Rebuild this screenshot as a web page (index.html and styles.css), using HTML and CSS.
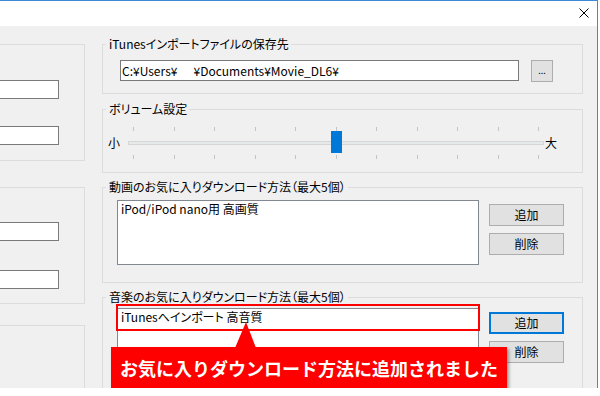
FILE: index.html
```html
<!DOCTYPE html>
<html lang="ja">
<head>
    <meta charset="UTF-8">
    <meta name="viewport" content="width=device-width, initial-scale=1.0">
    <title>設定</title>
    <link rel="stylesheet" href="styles.css">
</head>
<body>
    <div class="window">
        <div class="titlebar">
            <svg class="close" width="10" height="10" viewBox="0 0 10 10">
                <path d="M0.5 0.5 L9.5 9.5 M9.5 0.5 L0.5 9.5" stroke="#000" stroke-width="1" fill="none"/>
            </svg>
        </div>

        <div class="client">
            <!-- left column, cut off by the crop -->
            <div class="col-left">
                <div class="box box-first">
                    <input class="field" type="text">
                    <input class="field field-second" type="text">
                </div>
                <div class="box box-middle">
                    <input class="field" type="text">
                    <input class="field field-second" type="text">
                </div>
                <div class="box box-last"></div>
            </div>

            <div class="col-right">
                <fieldset class="group group-path">
                    <legend>iTunesインポートファイルの保存先</legend>
                    <div class="group-body path-row">
                        <input class="path" type="text" value="C:¥Users¥      ¥Documents¥Movie_DL6¥">
                        <button class="btn btn-browse">...</button>
                    </div>
                </fieldset>

                <fieldset class="group group-volume">
                    <legend>ボリューム設定</legend>
                    <div class="group-body volume-row">
                        <span class="volume-label">小</span>
                        <div class="slider">
                            <div class="ticks"><i></i><i></i><i></i><i></i><i></i><i></i><i></i><i></i><i></i><i></i><i></i></div>
                            <div class="track"></div>
                            <div class="ticks"><i></i><i></i><i></i><i></i><i></i><i></i><i></i><i></i><i></i><i></i><i></i></div>
                            <div class="thumb"></div>
                        </div>
                        <span class="volume-label volume-max">大</span>
                    </div>
                </fieldset>

                <fieldset class="group group-video">
                    <legend>動画のお気に入りダウンロード方法（最大5個）</legend>
                    <div class="group-body list-row">
                        <div class="listbox">
                            <div class="list-item">iPod/iPod nano用 高画質</div>
                        </div>
                        <div class="list-buttons">
                            <button class="btn">追加</button>
                            <button class="btn">削除</button>
                        </div>
                    </div>
                </fieldset>

                <fieldset class="group group-music">
                    <legend>音楽のお気に入りダウンロード方法（最大5個）</legend>
                    <div class="group-body list-row">
                        <div class="listbox">
                            <div class="list-item">iTunesへインポート 高音質</div>
                            <div class="highlight"></div>
                        </div>
                        <div class="list-buttons">
                            <button class="btn btn-focus">追加</button>
                            <button class="btn">削除</button>
                        </div>
                    </div>
                </fieldset>
            </div>
        </div>

        <div class="callout">お気に入りダウンロード方法に追加されました</div>
    </div>
</body>
</html>
```

FILE: styles.css
```css
body {
    margin: 0;
    background-color: #ffffff;
    font-family: "Noto Sans CJK JP", "Noto Sans", sans-serif;
    font-size: 12px;
    color: #000000;
}
.window {
    position: relative;
    width: 597px;
    height: 387px;
    border-top: 1px solid #3d8bd6;
    border-right: 1px solid #3d8bd6;
    background-color: #f0f0f0;
}
.titlebar {
    height: 25px;
    background-color: #ffffff;
    display: flex;
    justify-content: flex-end;
    align-items: flex-start;
    padding-right: 8px;
    box-sizing: border-box;
}
.close {
    margin-top: 7px;
}
.client {
    height: 362px;
    overflow: hidden;
    display: flex;
    align-items: flex-start;
    gap: 17px;
    font-feature-settings: "palt";
}

/* left column */
.col-left {
    width: 85px;
    flex-shrink: 0;
    padding-top: 18px;
}
.box {
    border: 1px solid #dcdcdc;
    border-left: none;
}
.box-first {
    padding: 35px 0 15px;
}
.box-middle {
    margin-top: 26px;
    padding: 34px 0 14px;
}
.box-last {
    margin-top: 21px;
    height: 80px;
}
.field {
    display: block;
    box-sizing: border-box;
    width: 80px;
    height: 19px;
    margin: 0 0 0 -21px;
    border: 1px solid #7a7a7a;
    background-color: #ffffff;
    padding: 0;
}
.box-first .field-second {
    margin-top: 27px;
}
.box-middle .field-second {
    margin-top: 29px;
}

/* right column */
.col-right {
    width: 481px;
    flex-shrink: 0;
    padding-top: 10px;
}
.group {
    margin: 0;
    padding: 0;
    min-inline-size: 0;
    border: 1px solid #dcdcdc;
}
.group legend {
    margin-left: 3px;
    padding: 0 2px 0 3px;
    line-height: 16px;
    font-size: 12px;
}
.group-volume {
    margin-top: 7px;
}
.group-video {
    margin-top: 6px;
}
.group-music {
    margin-top: 6px;
}

.path-row {
    display: flex;
    align-items: flex-start;
    padding: 8px 0 11px 17px;
}
.path {
    box-sizing: border-box;
    width: 399px;
    height: 21px;
    margin: 0;
    padding: 0 1px;
    border: 1px solid #7a7a7a;
    font-family: inherit;
    font-size: 12px;
    font-feature-settings: "palt";
    color: #000000;
    background-color: #ffffff;
}
.btn {
    box-sizing: border-box;
    width: 75px;
    height: 22px;
    margin: 0;
    padding: 0;
    border: 1px solid #adadad;
    background-color: #e1e1e1;
    font-family: inherit;
    font-size: 12px;
    line-height: 18px;
    color: #000000;
}
.btn-browse {
    width: 22px;
    height: 22px;
    margin-left: 12px;
    font-size: 9px;
    line-height: 14px;
}
.btn-focus {
    border: 2px solid #0078d7;
}

/* volume */
.volume-row {
    display: flex;
    align-items: center;
    padding: 10px 0 13px 5px;
}
.volume-label {
    width: 12px;
    line-height: 16px;
}
.slider {
    position: relative;
    width: 416px;
    height: 32px;
    margin-left: 8px;
    display: flex;
    flex-direction: column;
    justify-content: space-between;
}
.volume-max {
    margin-left: 1px;
}
.ticks {
    display: flex;
    justify-content: space-between;
    padding: 0 5px;
    height: 4px;
}
.ticks i {
    width: 1px;
    height: 4px;
    background-color: #c4c4c4;
}
.track {
    box-sizing: border-box;
    height: 4px;
    border: 1px solid #d6d6d6;
    background-color: #e7eaea;
}
.thumb {
    position: absolute;
    left: 203px;
    top: 4px;
    width: 11px;
    height: 22px;
    background-color: #0078d7;
}

/* favourites lists */
.list-row {
    display: flex;
    align-items: flex-start;
    padding: 5px 0 17px 14px;
}
.group-music .list-row {
    padding-top: 3px;
}
.listbox {
    position: relative;
    box-sizing: border-box;
    width: 362px;
    height: 65px;
    border: 1px solid #828790;
    background-color: #ffffff;
}
.list-item {
    padding: 0 3px;
    line-height: 15px;
    white-space: nowrap;
}
.list-buttons {
    display: flex;
    flex-direction: column;
    gap: 7px;
    margin: 4px 0 0 10px;
}

/* annotation overlays */
.highlight {
    position: absolute;
    left: -2px;
    top: -5px;
    width: 364px;
    height: 27px;
    box-sizing: border-box;
    border: 2px solid #ff0000;
}
.callout {
    position: absolute;
    left: 111px;
    top: 346px;
    width: 396px;
    height: 43px;
    background-color: #ff0000;
    box-shadow: 2px 2px 3px rgba(0, 0, 0, 0.35);
    color: #ffffff;
    font-size: 18px;
    font-weight: bold;
    line-height: 43px;
    text-align: center;
    white-space: nowrap;
}
.callout::before {
    content: "";
    position: absolute;
    left: 124px;
    top: -25px;
    width: 21px;
    height: 26px;
    background-color: #ff0000;
    clip-path: polygon(11px 0, 100% 100%, 0 100%);
}
```
